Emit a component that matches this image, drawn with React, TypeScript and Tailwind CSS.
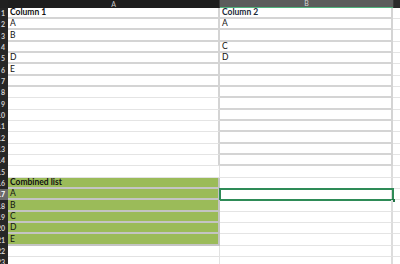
import React from "react";

// 表のデータ
const COL_A: Record<number, string> = {
    1: "Column 1",
    2: "A",
    3: "B",
    5: "D",
    6: "E",
    16: "Combined list",
    17: "A",
    18: "B",
    19: "C",
    20: "D",
    21: "E",
};

const COL_B: Record<number, string> = {
    1: "Column 2",
    2: "A",
    4: "C",
    5: "D",
};

const ROWS = Array.from({ length: 23 }, (_, i) => i + 1);
const SELECTED_ROW = 17;

const isGreen = (r: number) => r >= 16 && r <= 21;
const isBold = (r: number) => r === 1 || r === 16;

export default function App() {
    return (
        <div
            className="relative w-[400px] h-[264px] overflow-hidden bg-white text-black antialiased"
            style={{ fontFamily: "Lato, 'Liberation Sans', sans-serif" }}
        >
            <Header />
            {ROWS.map((r) => (
                <Row key={r} r={r} />
            ))}
        </div>
    );
}

function Header() {
    return (
        <div className="flex h-[8px] text-[7px] leading-[8px] text-[#c8c8c8]">
            <div className="w-[8px] bg-[#202020]" />
            <div className="w-[212px] bg-[#1e1e1e] border-r border-[#3a3a3a] text-center">
                A
            </div>
            <div className="w-[173px] bg-[#5c5c5c] border-b border-[#4fb37c] text-center leading-[7px] text-[#d8d8d8]">
                B
            </div>
            <div className="flex-1 bg-[#2a2a2a] border-l border-[#3a3a3a]" />
        </div>
    );
}

function Row({ r }: { r: number }) {
    const tall = r % 3 === 0;
    const selected = r === SELECTED_ROW;
    const green = isGreen(r);
    const aBordered = r <= 7;
    const bBordered = r <= 14;

    return (
        <div className={`relative flex ${tall ? "h-[12px]" : "h-[11px]"}`}>
            <div
                className={`w-[8px] flex justify-end items-center overflow-hidden whitespace-nowrap pr-[3px] text-[7px] font-bold ${
                    selected
                        ? "bg-[#6a6a6a] text-white"
                        : "bg-[#262626] text-[#cfcfcf]"
                }`}
            >
                {r}
            </div>
            <div
                className={`w-[212px] flex items-center pl-[2px] text-[8.5px] leading-[9px] whitespace-nowrap text-[#111] ${
                    isBold(r) ? "font-bold" : ""
                } ${
                    green
                        ? "bg-[#9bbb59] border-b-2 border-r-2 border-[#c4c4c4]"
                        : aBordered
                          ? "border-b-2 border-r-2 border-[#d4d4d4]"
                          : bBordered
                            ? "border-b border-r-2 border-b-[#e4e4e4] border-r-[#d4d4d4]"
                            : "border-b border-r border-[#e2e2e2]"
                }`}
            >
                {COL_A[r] ?? ""}
            </div>
            <div
                className={`w-[173px] flex items-center pl-[2px] text-[8.5px] leading-[9px] whitespace-nowrap ${
                    isBold(r) ? "font-bold text-[#1b2a3a]" : "text-[#111]"
                } ${
                    bBordered
                        ? "border-b-2 border-r-2 border-[#d4d4d4]"
                        : "border-b border-r-2 border-b-[#e4e4e4] border-r-[#dcdcdc]"
                }`}
            >
                {COL_B[r] ?? ""}
            </div>
            <div className="flex-1 border-b border-[#e4e4e4]" />
            {selected && (
                <div className="absolute left-[219px] top-[-1px] w-[175px] h-[13px] border-2 border-[#2e8b57] pointer-events-none">
                    <div className="absolute right-[-3px] bottom-[-3px] w-[3px] h-[3px] bg-[#217346]" />
                </div>
            )}
        </div>
    );
}
